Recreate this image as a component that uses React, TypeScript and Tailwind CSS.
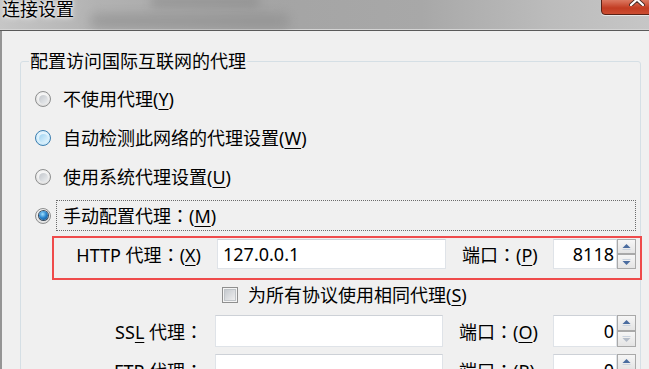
import React from "react";

type RadioState = "normal" | "hover" | "checked";

function Radio({ state }: { state: RadioState }) {
  const outer =
    state === "hover"
      ? "border-[#3c7fb1] bg-[radial-gradient(circle_at_50%_40%,#f2faff_0%,#dcf1fc_50%,#b3dcf3_100%)]"
      : "border-[#8e8f8f] bg-[radial-gradient(circle_at_50%_40%,#ffffff_0%,#f2f2f2_45%,#cfcfcf_100%)]";
  let inner = "bg-[linear-gradient(135deg,#c3c7cc_0%,#eceef0_100%)]";
  if (state === "hover") inner = "bg-[linear-gradient(135deg,#9fd4f2_0%,#e6f6fe_100%)]";
  if (state === "checked")
    inner = "bg-[radial-gradient(circle_at_40%_35%,#9fe0ff_0%,#2a86cf_45%,#0a3f7a_100%)] shadow-[0_0_0_1px_#3d4c5c]";
  return (
    <div className={`w-[16px] h-[16px] shrink-0 rounded-full border flex items-center justify-center ${outer}`}>
      <div className={`w-[9px] h-[9px] rounded-full ${inner}`} />
    </div>
  );
}

function Key({ children }: { children: React.ReactNode }) {
  return <span className="underline decoration-1 underline-offset-[3px]">{children}</span>;
}

// full-width colon, centred in its cell as in the original dialog font
function Colon() {
  return <span className="font-['Noto_Sans_CJK_JP',sans-serif]">：</span>;
}

function SpinBtn({ dir, disabled }: { dir: "up" | "down"; disabled?: boolean }) {
  const fill = disabled ? "#b4bcc8" : "#4a6c9f";
  return (
    <div className="flex-1 border border-[#a9a9a9] bg-[linear-gradient(180deg,#f6f6f6_0%,#e4e4e4_100%)] flex items-center justify-center">
      <svg width="11" height="8" viewBox="0 0 11 8">
        {dir === "up" ? (
          <>
            <path d="M1.5 5 L5.5 1 L9.5 5 Z" fill={fill} />
            <line x1="1.5" y1="6.5" x2="9.5" y2="6.5" stroke="#c9d2de" strokeWidth="1" />
          </>
        ) : (
          <>
            <line x1="1.5" y1="1.5" x2="9.5" y2="1.5" stroke="#c9d2de" strokeWidth="1" />
            <path d="M1.5 3 L9.5 3 L5.5 7 Z" fill={fill} />
          </>
        )}
      </svg>
    </div>
  );
}

function Spinner({ downDisabled }: { downDisabled?: boolean }) {
  return (
    <div className="flex flex-col w-[19px] h-full">
      <SpinBtn dir="up" />
      <SpinBtn dir="down" disabled={downDisabled} />
    </div>
  );
}

function TextBox({ value, className }: { value?: string; className: string }) {
  return (
    <div
      className={`bg-white border border-[#dfe3e8] border-t-[#cdd1d7] flex items-center pl-[5px] leading-[20px] ${className}`}
    >
      {value}
    </div>
  );
}

function PortBox({ value, downDisabled }: { value: string; downDisabled?: boolean }) {
  return (
    <div className="flex h-full">
      <div className="w-[64px] h-full bg-white border border-[#dfe3e8] border-t-[#cdd1d7] flex items-center justify-end pr-[2px] leading-[20px]">
        {value}
      </div>
      <Spinner downDisabled={downDisabled} />
    </div>
  );
}

export default function App() {
  return (
    <div className="w-[649px] h-[369px] overflow-hidden bg-[#f0f0f0] flex flex-col text-[18px] text-black font-['Noto_Sans','Noto_Sans_CJK_SC',sans-serif]">
      {/* Title bar (blurred aero glass) */}
      <div className="relative h-[31px] shrink-0 overflow-hidden border-b border-[#5a5a5a] shadow-[inset_0_-1px_0_#d4d4d4] bg-[linear-gradient(90deg,#c6c6c6_0%,#b2b2b2_15%,#a4a4a4_40%,#a8a8a8_65%,#bcbcbc_85%,#c6c6c6_100%)]">
        <div className="absolute left-[90px] top-[14px] w-[200px] h-[14px] rounded-full bg-[#8f8f8f] blur-[6px] opacity-70" />
        <div className="absolute left-[150px] top-[-4px] w-[110px] h-[12px] rounded-full bg-[#8a8a8a] blur-[5px] opacity-60" />
        <span className="absolute left-[2px] top-0 leading-[18px] text-[18px] text-black [text-shadow:0_0_6px_#ffffff,0_0_3px_#ffffff]">
          连接设置
        </span>
        <div className="absolute left-[601px] top-[-7px] w-[56px] h-[22px] rounded-[4px] border border-[#5a2216] shadow-[0_1px_0_#e6e6e6] bg-[linear-gradient(180deg,#eaa08c_0%,#d66a52_40%,#c23c22_70%,#cc4d31_100%)]">
          <svg className="absolute left-[27px] top-[-1px]" width="16" height="13" viewBox="0 0 16 13">
            <path d="M2 1 L14 12 M14 1 L2 12" stroke="#4a2a24" strokeWidth="4" strokeLinecap="round" />
            <path d="M2 1 L14 12 M14 1 L2 12" stroke="#ffffff" strokeWidth="2.2" strokeLinecap="round" />
          </svg>
        </div>
      </div>

      {/* Dialog body */}
      <div className="flex-1 border-l-2 border-[#959595]">
        <div className="relative mt-[30px] ml-[18px] w-[621px] h-[340px] border border-[#d5dfe5] rounded-[3px] pt-[25px]">
          <span className="absolute left-[8px] top-[-10px] px-[1px] bg-[#f0f0f0] leading-[18px]">
            配置访问国际互联网的代理
          </span>

          <div className="flex items-center h-[24px] pl-[14px] gap-[12px] leading-[24px]">
            <Radio state="normal" />
            <span>
              不使用代理(<Key>Y</Key>)
            </span>
          </div>
          <div className="flex items-center h-[24px] pl-[14px] gap-[12px] mt-[15px] leading-[24px]">
            <Radio state="hover" />
            <span>
              自动检测此网络的代理设置(<Key>W</Key>)
            </span>
          </div>
          <div className="flex items-center h-[24px] pl-[14px] gap-[12px] mt-[15px] leading-[24px]">
            <Radio state="normal" />
            <span>
              使用系统代理设置(<Key>U</Key>)
            </span>
          </div>
          <div className="flex items-center mt-[11px] pl-[14px] mr-[4px]">
            <Radio state="checked" />
            <div className="ml-[5px] flex-1 h-[31px] border border-dotted border-[#6a6a6a] pl-[6px] flex items-center leading-[24px]">
              <span>
                手动配置代理<Colon />(<Key>M</Key>)
              </span>
            </div>
          </div>

          {/* Highlighted HTTP row */}
          <div className="mt-[5px] ml-[31px] w-[590px] h-[44px] border-2 border-[#ef4b4b] flex items-start pt-[1px]">
            <div className="w-[147px] h-[30px] flex items-center justify-end leading-[24px]">
              <span>
                HTTP 代理<Colon />(<Key>X</Key>)
              </span>
            </div>
            <TextBox value="127.0.0.1" className="ml-[16px] w-[229px] h-[30px]" />
            <div className="ml-[16px] w-[91px] h-[30px] flex items-center leading-[24px]">
              <span>
                端口<Colon />(<Key>P</Key>)
              </span>
            </div>
            <div className="h-[30px]">
              <PortBox value="8118" />
            </div>
          </div>

          <div className="mt-[6px] ml-[201px] flex items-center gap-[10px] h-[18px]">
            <div className="w-[16px] h-[16px] border border-[#8f8f8f] bg-[#f4f4f4] flex items-center justify-center">
              <div className="w-[12px] h-[12px] border border-[#c0c4c8] bg-[linear-gradient(135deg,#c6cacf_0%,#eeeeef_100%)]" />
            </div>
            <span className="leading-[18px]">
              为所有协议使用相同代理(<Key>S</Key>)
            </span>
          </div>

          <div className="mt-[11px] flex h-[32px]">
            <div className="w-[182px] flex items-center justify-end leading-[24px]">
              <span>
                SS<Key>L</Key> 代理<Colon />
              </span>
            </div>
            <TextBox className="ml-[12px] w-[228px] h-[32px]" />
            <div className="ml-[16px] w-[94px] flex items-center leading-[24px]">
              <span>
                端口<Colon />(<Key>O</Key>)
              </span>
            </div>
            <PortBox value="0" downDisabled />
          </div>

          <div className="mt-[7px] flex h-[32px]">
            <div className="w-[182px] flex items-center justify-end leading-[24px]">
              <span>
                <Key>F</Key>TP 代理<Colon />
              </span>
            </div>
            <TextBox className="ml-[12px] w-[228px] h-[32px]" />
            <div className="ml-[16px] w-[94px] flex items-center leading-[24px]">
              <span>
                端口<Colon />(<Key>R</Key>)
              </span>
            </div>
            <PortBox value="0" downDisabled />
          </div>
        </div>
      </div>
    </div>
  );
}
